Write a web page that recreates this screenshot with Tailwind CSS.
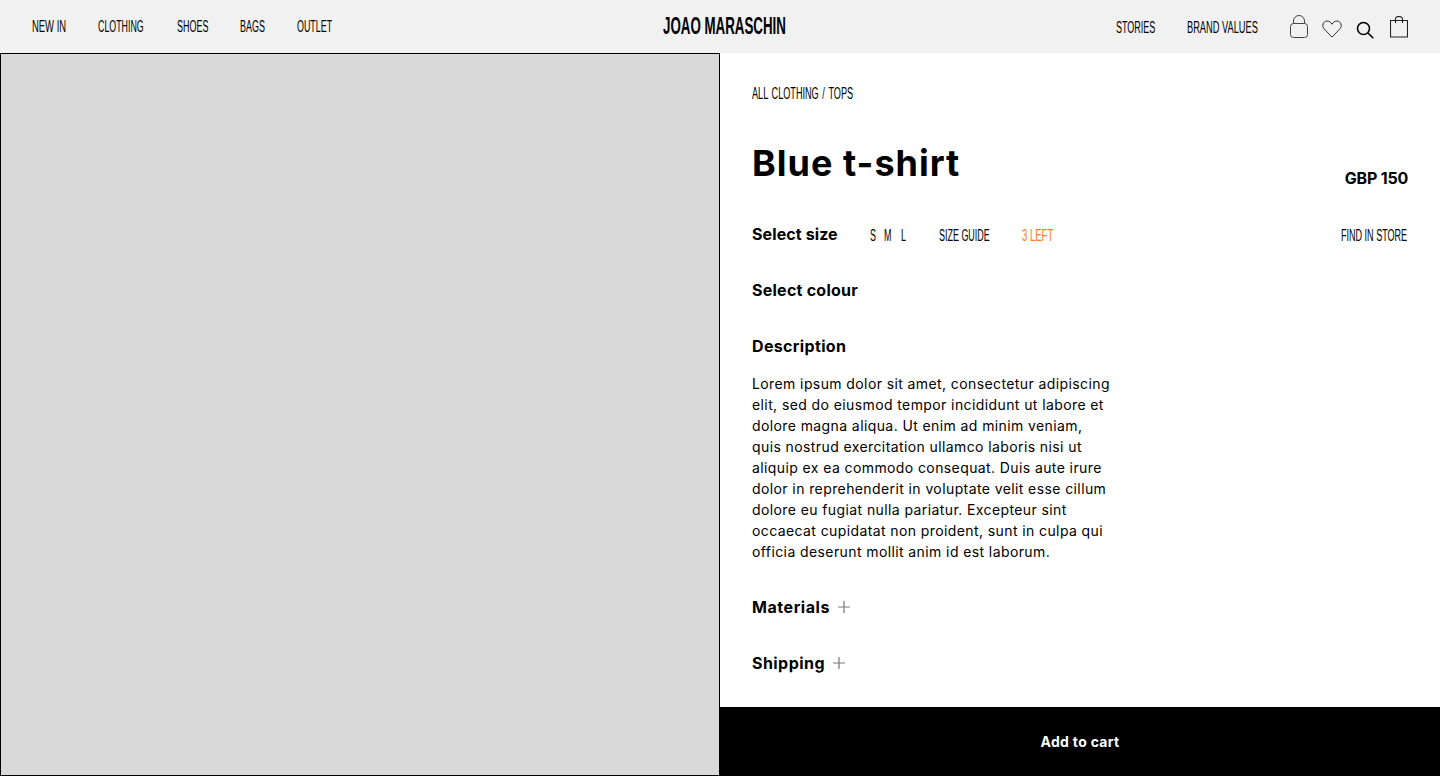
<!DOCTYPE html>
<html lang="en">
<head>
    <meta charset="UTF-8">
    <title>Blue t-shirt - Joao Maraschin</title>
    <script src="https://cdn.jsdelivr.net/npm/@tailwindcss/browser@4"></script>
</head>
<body class="bg-white text-black h-[776px] overflow-hidden font-['Inter',sans-serif]">
    <!-- header -->
    <header class="h-[53px] bg-[#f1f1f1] grid grid-cols-3 items-center px-8 font-['Liberation_Sans',sans-serif] text-[16px] leading-none">
        <nav class="flex gap-8">
            <a href="#" class="w-[34px] whitespace-nowrap origin-left scale-x-[0.59]">NEW IN</a>
            <a href="#" class="w-[47px] whitespace-nowrap origin-left scale-x-[0.553]">CLOTHING</a>
            <a href="#" class="w-[31px] whitespace-nowrap origin-left scale-x-[0.56]">SHOES</a>
            <a href="#" class="w-[25px] whitespace-nowrap origin-left scale-x-[0.56]">BAGS</a>
            <a href="#" class="w-[35px] whitespace-nowrap origin-left scale-x-[0.556]">OUTLET</a>
        </nav>
        <a href="#" class="w-[123px] ml-[172px] text-[23.500px] font-bold whitespace-nowrap origin-left scale-x-[0.567]">JOAO MARASCHIN</a>
        <div class="flex items-center justify-end">
            <a href="#" class="w-[39px] mr-8 mt-0.5 whitespace-nowrap origin-left scale-x-[0.563]">STORIES</a>
            <a href="#" class="w-[71px] mr-[32px] mt-0.5 whitespace-nowrap origin-left scale-x-[0.579]">BRAND VALUES</a>
            <svg class="mr-[14px] mt-px" width="18" height="24" viewBox="0 0 18 24" fill="none" stroke="#444" stroke-width="1"><rect x="0.5" y="8.5" width="17" height="14" rx="3"/><path d="M3.5 8.5V6a5.5 5.5 0 0 1 11 0v2.5"/></svg>
            <svg class="mr-[14px] mt-1" width="20" height="18" viewBox="0 0 20 18" fill="none" stroke="#333" stroke-width="1"><path d="M10 17.2 2 8.8C-.4 6 1 1 5 1c2.300 0 4 1.300 5 3.300C11 2.300 12.700 1 15 1c4 0 5.400 5 3 7.800z"/></svg>
            <svg class="mr-[16px] mt-1.5" width="18" height="18" viewBox="0 0 18 18" fill="none" stroke="#000" stroke-width="1.6"><circle cx="7.500" cy="7.500" r="6"/><path d="m12 12 5.300 5.300"/></svg>
            <svg width="18" height="22" viewBox="0 0 18 22" fill="none" stroke="#222" stroke-width="1.100"><path d="M.5 4.500h17v16.500H.5z"/><path d="M5.500 7V3a3.500 2.500 0 0 1 7 0v4"/></svg>
        </div>
    </header>

    <main class="grid grid-cols-2 h-[723px]">
        <div class="bg-[#d9d9d9] border border-black"></div>

        <section class="flex flex-col min-h-0">
            <div class="flex-1 px-8 pt-[32px]">
                <p class="font-['Liberation_Sans',sans-serif] text-[16px] leading-[18px] whitespace-nowrap origin-left scale-x-[0.57] [word-spacing:2px]">ALL CLOTHING / TOPS</p>

                <div class="flex justify-between mt-[33px]">
                    <h1 class="text-[36px] leading-[54px] font-bold tracking-[1px]">Blue t-shirt</h1>
                    <span class="text-[16px] leading-6 font-bold mt-[30px] tracking-[-0.2px]">GBP 150</span>
                </div>

                <div class="flex items-center mt-[32px] h-6">
                    <h2 class="w-[118px] text-[16px] font-bold whitespace-nowrap tracking-[0.1px]">Select size</h2>
                    <div class="flex items-center flex-1 font-['Liberation_Sans',sans-serif] text-[16px] leading-none mt-1">
                        <span class="w-[14px] origin-left scale-x-[0.56]">S</span>
                        <span class="w-[17px] origin-left scale-x-[0.56]">M</span>
                        <span class="w-[38px] origin-left scale-x-[0.56]">L</span>
                        <span class="w-[83px] whitespace-nowrap origin-left scale-x-[0.56]">SIZE GUIDE</span>
                        <span class="w-[31px] whitespace-nowrap origin-left scale-x-[0.595] text-[#ff7a1a]">3 LEFT</span>
                        <span class="w-[67px] ml-auto whitespace-nowrap origin-left scale-x-[0.565]">FIND IN STORE</span>
                    </div>
                </div>

                <h2 class="text-[16px] leading-6 font-bold mt-8 tracking-[0.25px]">Select colour</h2>
                <h2 class="text-[16px] leading-6 font-bold mt-8 tracking-[0.35px]">Description</h2>

                <p class="w-[360px] text-[14px] leading-[21px] mt-[15px] tracking-[0.4px]">Lorem ipsum dolor sit amet, consectetur adipiscing elit, sed do eiusmod tempor incididunt ut labore et dolore magna aliqua. Ut enim ad minim veniam, quis nostrud exercitation ullamco laboris nisi ut aliquip ex ea commodo consequat. Duis aute irure dolor in reprehenderit in voluptate velit esse cillum dolore eu fugiat nulla pariatur. Excepteur sint occaecat cupidatat non proident, sunt in culpa qui officia deserunt mollit anim id est laborum.</p>

                <div class="flex items-center gap-[7px] mt-[33px] h-6">
                    <h2 class="text-[16px] font-bold tracking-[0.55px]">Materials</h2>
                    <svg width="14" height="14" viewBox="0 0 14 14" stroke="#777" stroke-width="1.200"><path d="M7 1v12M1 7h12"/></svg>
                </div>
                <div class="flex items-center gap-[7px] mt-8 h-6">
                    <h2 class="text-[16px] font-bold tracking-[0.45px]">Shipping</h2>
                    <svg width="14" height="14" viewBox="0 0 14 14" stroke="#777" stroke-width="1.200"><path d="M7 1v12M1 7h12"/></svg>
                </div>
            </div>

            <button class="h-[69px] bg-black text-white text-[14px] font-bold tracking-[0.3px]">Add to cart</button>
        </section>
    </main>
</body>
</html>
